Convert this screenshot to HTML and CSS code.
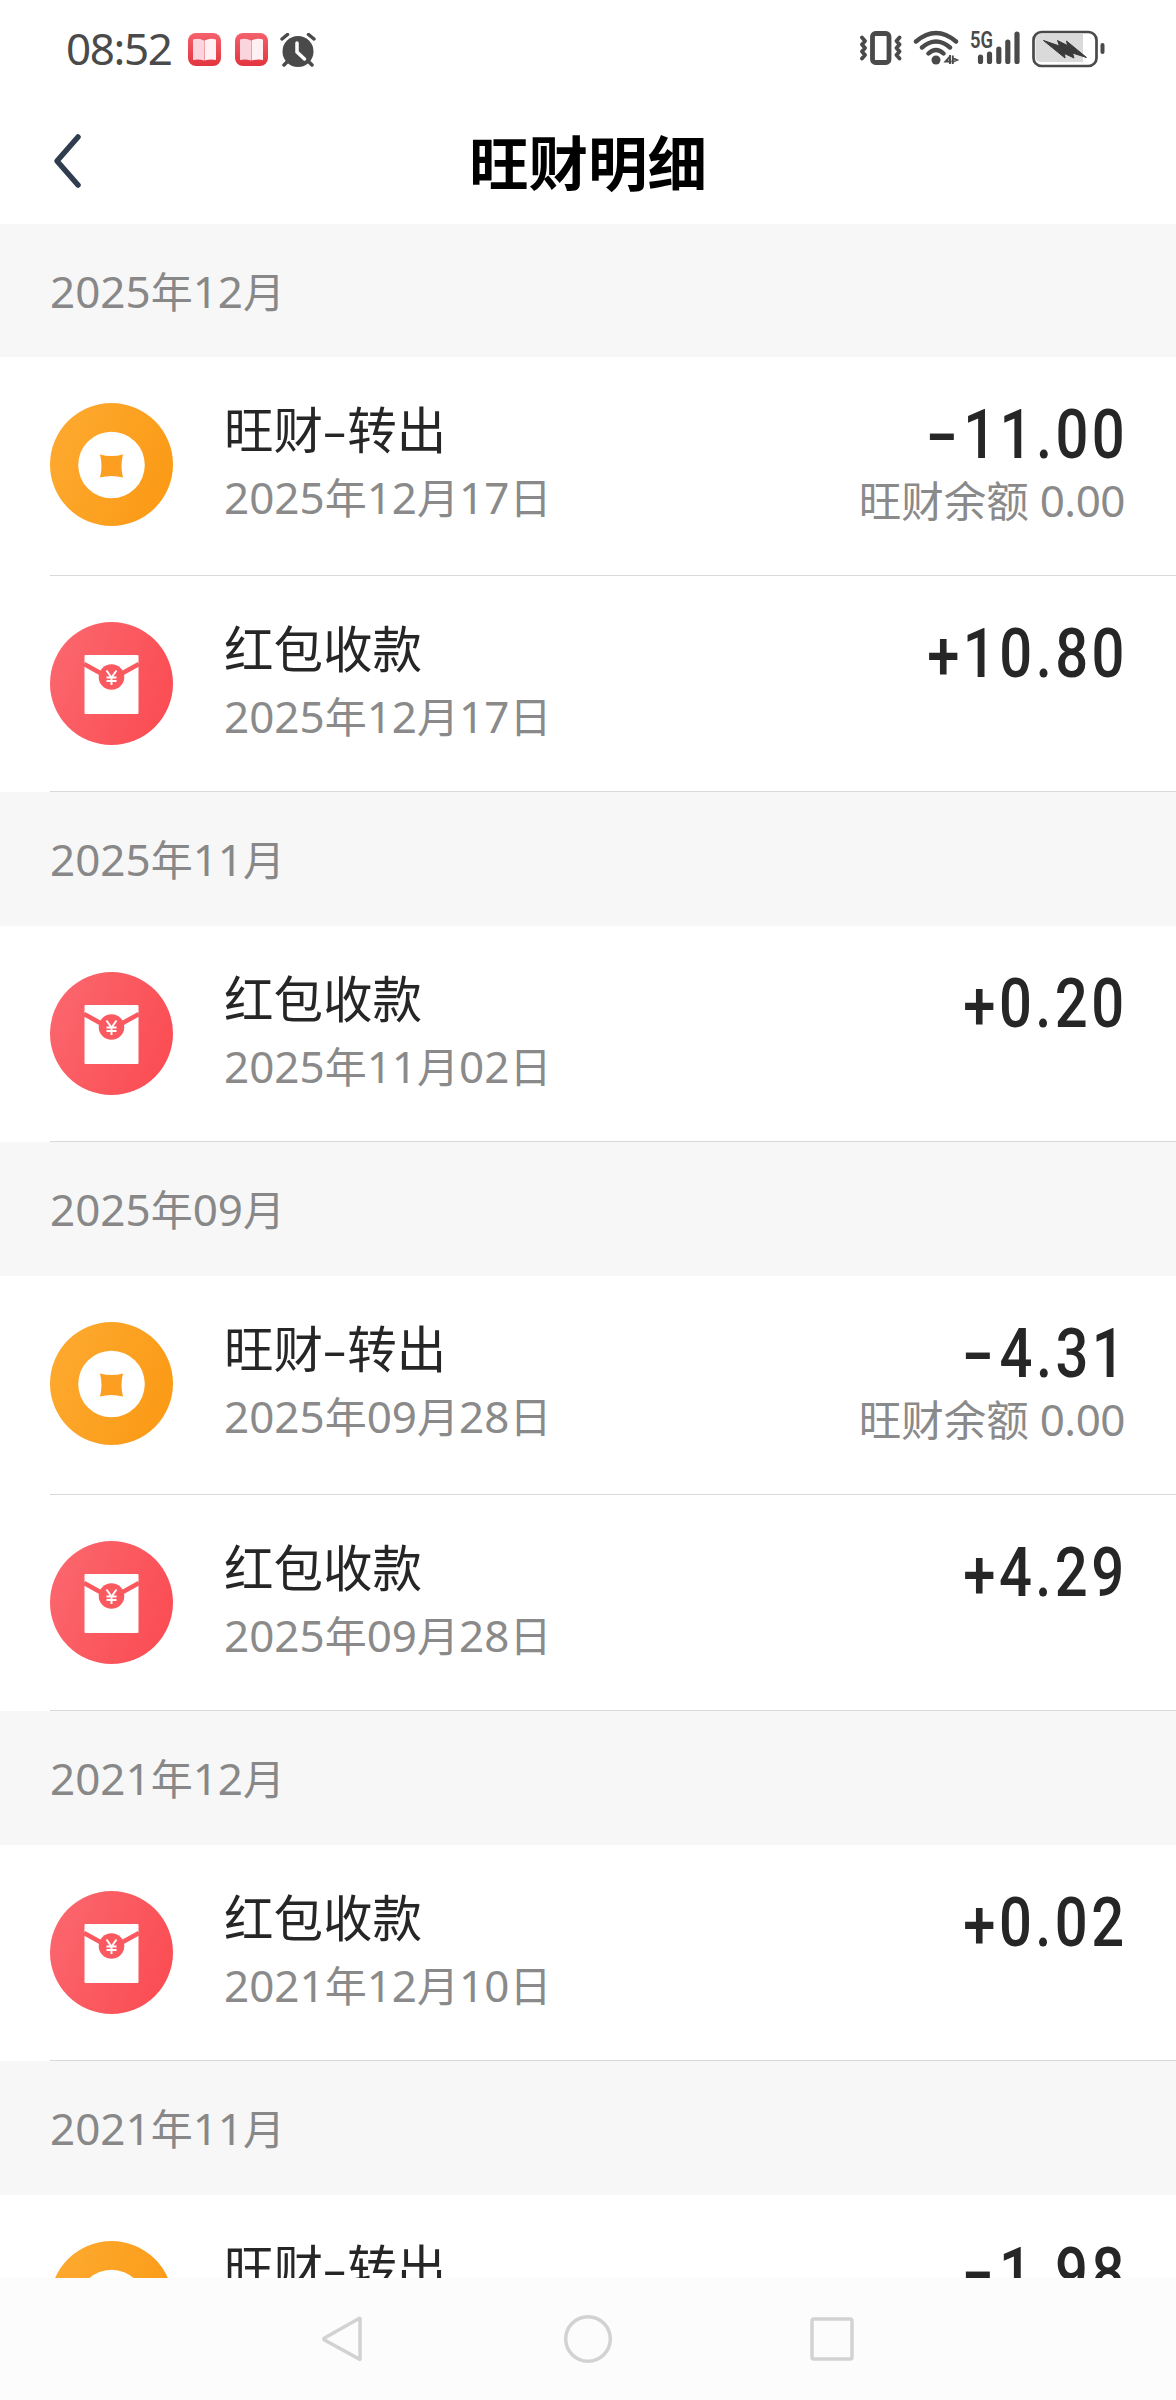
FILE: index.html
```html
<!DOCTYPE html>
<html lang="zh-CN">
<head>
<meta charset="utf-8">
<title>旺财明细</title>
<link rel="stylesheet" href="styles.css">
</head>
<body>
<svg class="defs" aria-hidden="true">
  <defs>
    <linearGradient id="gold" x1="0" x2="1" y1="0.3" y2="0.7"><stop offset="0" stop-color="#fda92f"/><stop offset="1" stop-color="#fb9a15"/></linearGradient>
    <linearGradient id="red" x1="0" x2="1" y1="0.3" y2="0.7"><stop offset="0" stop-color="#fb666d"/><stop offset="1" stop-color="#fb4c53"/></linearGradient>
    <linearGradient id="app" x1="0" x2="0" y1="0" y2="1"><stop offset="0" stop-color="#f4616c"/><stop offset="1" stop-color="#e2353f"/></linearGradient>
    <symbol id="coin" viewBox="0 0 123 123">
      <circle cx="61.5" cy="61.5" r="61.5" fill="url(#gold)"/>
      <circle cx="61.5" cy="62" r="33.3" fill="#fff"/>
      <path d="M50 51.500Q61.500 54.500 73 51.500Q70 63 73 74.500Q61.500 71.500 50 74.500Q53 63 50 51.500Z" fill="#fc9f20"/>
    </symbol>
    <symbol id="packet" viewBox="0 0 123 123">
      <circle cx="61.500" cy="61.500" r="61.500" fill="url(#red)"/>
      <rect x="34.500" y="33" width="54" height="59" rx="1" fill="#fff"/>
      <path d="M34 42L53 52.500M89 42L70 52.500" stroke="#fb5960" stroke-width="4.600"/>
      <circle cx="61.500" cy="55" r="12.800" fill="#fb5960"/>
      <path d="M56.500 48.500L61.500 55.500L66.500 48.500M61.500 55V63M56.500 55.500H66.500M56.500 59H66.500" fill="none" stroke="#fff" stroke-width="1.900"/>
    </symbol>
    <symbol id="book" viewBox="0 0 33 33">
      <rect width="33" height="33" rx="8" fill="url(#app)"/>
      <path d="M5 6.500Q11 4.500 16 7.500V27.500Q11 26 5 27Z" fill="#fbd5dd"/>
      <path d="M28 6.500Q22 4.500 16.500 7.500V27.500Q22 26 28 27Z" fill="#fff0f3"/>
    </symbol>
  </defs>
</svg>
<div class="screen">
  <header class="status">
    <div class="status-left">
      <span class="clock">08:52</span>
      <svg class="app-icon" width="33" height="33"><use href="#book"/></svg>
      <svg class="app-icon" width="33" height="33"><use href="#book"/></svg>
      <svg width="36" height="34" viewBox="0 0 36 34">
        <circle cx="18" cy="18.500" r="15.500" fill="#4a4a4a"/>
        <path d="M2 6L7.500 1.500M34 6L28.500 1.500M8 28L4 32M28 28L32 32" stroke="#4a4a4a" stroke-width="3.500" stroke-linecap="round"/>
        <path d="M17 10V19L24.500 26" fill="none" stroke="#fff" stroke-width="3.500" stroke-linecap="round"/>
      </svg>
    </div>
    <svg class="status-right" width="246" height="40" viewBox="0 0 246 40" fill="none" stroke="#4a4a4a">
      <rect x="12.500" y="5.500" width="16.500" height="29" rx="3" stroke-width="4.800"/>
      <path d="M2 9.500L5 13L2 16.500L5 20L2 23.500L5 27L2 30.500M39.500 9.500L36.500 13L39.500 16.500L36.500 20L39.500 23.500L36.500 27L39.500 30.500" stroke-width="3.800" stroke-linecap="round" stroke-linejoin="round"/>
      <path d="M56 13.500Q76 -3.500 96 13.500M62 19.500Q76 7.500 90 19.500M68.500 25.500Q76 18.500 83.500 25.500" stroke-width="4.400" stroke-linecap="round"/>
      <circle cx="76" cy="32" r="4.500" fill="#4a4a4a" stroke="none"/>
      <path d="M90 27V36M90.500 28L85.500 33.500H91.500M92.800 27.500V36M92.500 30L97 32L92.500 34" stroke-width="1.900"/>
      <text x="110" y="20" class="net" textLength="23" lengthAdjust="spacingAndGlyphs">5G</text>
      <path d="M120.500 29V33.500M129.500 26V33.500M138.800 21V33.500M147.800 14V33.500M157 6V33.500" stroke-width="5.200" stroke-linecap="round"/>
      <path d="M181 6H223V34H181Q175.500 34 175.500 29V11Q175.500 6 181 6Z" fill="#dadada" stroke="none"/>
      <rect x="173.500" y="4" width="63" height="34" rx="8" stroke-width="2.700"/>
      <path d="M183.500 12.500L199.500 18L197.500 12.500L207.500 17.500L206.500 13L226.500 29.500L212.500 25L214 30L204.500 25.500L205 30Z" fill="#3a3a3a" stroke="#3a3a3a" stroke-width="1" stroke-linejoin="round"/>
      <path d="M242.500 17V24" stroke-width="4" stroke-linecap="round"/>
    </svg>
  </header>
  <div class="titlebar">
    <svg class="back" width="32" height="56" viewBox="0 0 32 56"><path d="M27 4L6 28L27 52" fill="none" stroke="#303d4f" stroke-width="5.500" stroke-linecap="round" stroke-linejoin="round"/></svg>
    <h1 class="title">旺财明细</h1>
  </div>
  <main class="list">
    <h2 class="month first"><b>2025</b>年<b>12</b>月</h2>
    <section class="row with-balance">
      <svg class="icon"><use href="#coin"/></svg>
      <div class="info"><div class="name">旺财<i class="dash">-</i>转出</div><div class="sub"><b>2025</b>年<b>12</b>月<b>17</b>日</div></div>
      <div class="money"><div class="amount"><i class="minus">-</i>11.00</div><div class="sub balance">旺财余额<b> 0.00</b></div></div>
    </section>
    <section class="row">
      <svg class="icon"><use href="#packet"/></svg>
      <div class="info"><div class="name">红包收款</div><div class="sub"><b>2025</b>年<b>12</b>月<b>17</b>日</div></div>
      <div class="money"><div class="amount"><i class="plus">+</i>10.80</div></div>
    </section>
    <h2 class="month"><b>2025</b>年<b>11</b>月</h2>
    <section class="row">
      <svg class="icon"><use href="#packet"/></svg>
      <div class="info"><div class="name">红包收款</div><div class="sub"><b>2025</b>年<b>11</b>月<b>02</b>日</div></div>
      <div class="money"><div class="amount"><i class="plus">+</i>0.20</div></div>
    </section>
    <h2 class="month"><b>2025</b>年<b>09</b>月</h2>
    <section class="row with-balance">
      <svg class="icon"><use href="#coin"/></svg>
      <div class="info"><div class="name">旺财<i class="dash">-</i>转出</div><div class="sub"><b>2025</b>年<b>09</b>月<b>28</b>日</div></div>
      <div class="money"><div class="amount"><i class="minus">-</i>4.31</div><div class="sub balance">旺财余额<b> 0.00</b></div></div>
    </section>
    <section class="row">
      <svg class="icon"><use href="#packet"/></svg>
      <div class="info"><div class="name">红包收款</div><div class="sub"><b>2025</b>年<b>09</b>月<b>28</b>日</div></div>
      <div class="money"><div class="amount"><i class="plus">+</i>4.29</div></div>
    </section>
    <h2 class="month"><b>2021</b>年<b>12</b>月</h2>
    <section class="row">
      <svg class="icon"><use href="#packet"/></svg>
      <div class="info"><div class="name">红包收款</div><div class="sub"><b>2021</b>年<b>12</b>月<b>10</b>日</div></div>
      <div class="money"><div class="amount"><i class="plus">+</i>0.02</div></div>
    </section>
    <h2 class="month"><b>2021</b>年<b>11</b>月</h2>
    <section class="row with-balance">
      <svg class="icon"><use href="#coin"/></svg>
      <div class="info"><div class="name">旺财<i class="dash">-</i>转出</div></div>
      <div class="money"><div class="amount"><i class="minus">-</i>1.98</div></div>
    </section>
  </main>
  <nav class="navbar">
    <svg width="48" height="50" viewBox="0 0 48 50"><path d="M41 4V45Q41 46 40 45L5.500 26Q4 25 5.500 24L40 4.500Q41 4 41 5Z"/></svg>
    <svg width="50" height="50" viewBox="0 0 50 50"><circle cx="25" cy="25" r="22.300"/></svg>
    <svg width="48" height="50" viewBox="0 0 48 50"><rect x="3" y="5" width="40" height="40" rx="2"/></svg>
  </nav>
</div>
</body>
</html>
```
FILE: styles.css
```css
* { box-sizing: border-box; }
body { margin: 0; background: #fff; font-family: "Noto Sans CJK SC", sans-serif; color: #262626; }
b { font-weight: 400; font-family: "Noto Sans", sans-serif; font-size: 44px; white-space: pre; }
i { font-style: normal; display: inline-block; }
.defs { position: absolute; width: 0; height: 0; }
.screen { width: 1176px; height: 2400px; display: flex; flex-direction: column; overflow: hidden; }

.status { height: 100px; flex: none; display: flex; justify-content: space-between; padding: 0 70px 0 66px; }
.status-left { display: flex; align-items: center; padding-bottom: 1px; }
.clock { width: 106px; margin: -3px 16px 0 0; font: 400 44px/50px "Noto Sans", sans-serif; letter-spacing: -1.4px; color: #4a4a4a; white-space: nowrap; }
.app-icon { margin-right: 14px; }
.app-icon + svg:not(.app-icon) { margin-left: -2px; }
.status-right { margin-top: 28px; }
.net { font: 600 23px Roboto, sans-serif; fill: #4a4a4a; stroke: none; }

.titlebar { height: 124px; flex: none; display: grid; grid-template-columns: 52px 1fr 52px; padding-top: 33px; }
.back { margin-left: 51px; }
.title { margin: -3px 0 0; text-align: center; font-size: 59.500px; line-height: 60px; font-weight: 700; color: #000; }

.list { flex: 1; min-height: 0; overflow: hidden; display: flex; flex-direction: column; }
.month { height: 134px; flex: none; margin: 0; padding-left: 50px; background: #f7f7f7; font-size: 42px; line-height: 131px; font-weight: 400; color: #888; }
.month.first { height: 133px; }
.row { height: 216px; flex: none; margin-left: 50px; padding: 46px 51px 0 0; border-bottom: 1px solid #d9d9d9; display: flex; }
.row.with-balance { height: 219px; }
.icon { width: 123px; height: 123px; flex: none; margin-right: 51px; }
.info { flex: 1; }
.name { font-size: 49.500px; line-height: 58px; margin-top: -4px; white-space: nowrap; }
.dash { margin: 0 4px 0 3px; transform: scaleX(1.5); }
.sub { font-size: 42px; line-height: 60px; margin-top: 9px; color: #8a8a8a; white-space: nowrap; }
.balance { font-size: 42.500px; margin-top: 4px; }
.balance b { letter-spacing: -.5px; }
.money { text-align: right; }
.amount { font: 500 69px/60px Roboto, sans-serif; margin: 2px -3px 0 0; letter-spacing: 4.100px; transform: scaleX(.84); transform-origin: right; white-space: nowrap; }
.minus { transform: scaleX(1.6); margin-right: 8px; }
.plus { transform: translateY(3px); }

.navbar { height: 122px; flex: none; background: #fcfcfc; display: flex; justify-content: center; gap: 196px; padding-top: 36px; }
.navbar svg { fill: none; stroke: #d2d2d2; stroke-width: 3.500px; }
```
